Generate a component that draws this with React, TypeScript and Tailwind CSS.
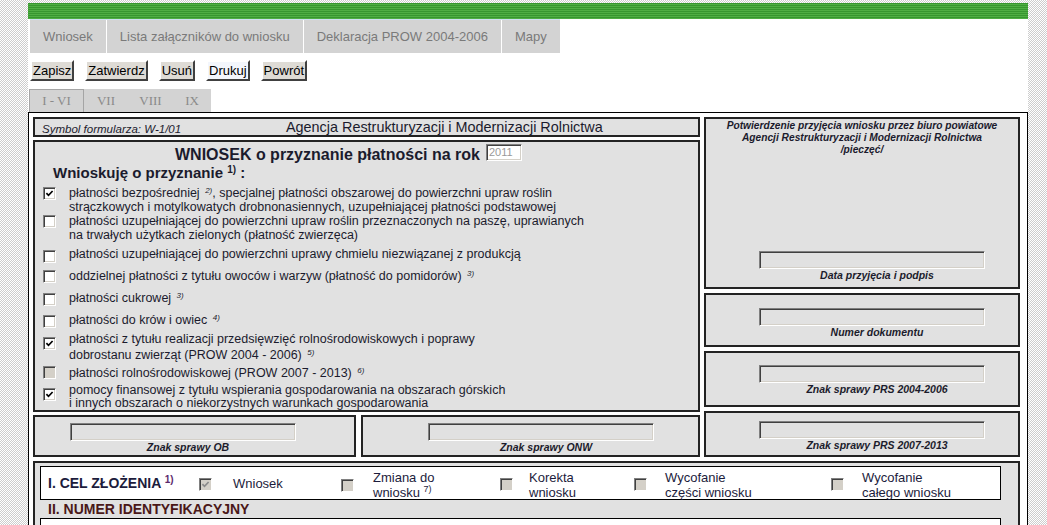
import type React from "react";

// Inset 3D border used by the old-style checkboxes and text fields
const inset =
	"border border-t-[#808080] border-l-[#808080] border-r-white border-b-white shadow-[inset_1px_1px_0_#404040,inset_-1px_-1px_0_#d4d0c8]";

const panel = "border-2 border-[#232323] bg-[#e1e1e1]";

const Box = ({
	checked = false,
	disabled = false,
	className = "",
}: {
	checked?: boolean;
	disabled?: boolean;
	className?: string;
}) => (
	<span
		className={`flex h-[13px] w-[13px] shrink-0 items-center justify-center ${inset} ${disabled ? "bg-[#d4d0c8]" : "bg-white"} ${className}`}
	>
		{checked && (
			<svg viewBox="0 0 9 9" className="h-[9px] w-[9px]">
				<path
					d="M1.4 4.1 3.5 6.3 7.6 2"
					fill="none"
					stroke={disabled ? "#8a8a8a" : "#000"}
					strokeWidth="1.7"
				/>
			</svg>
		)}
	</span>
);

const S = ({ children }: { children: React.ReactNode }) => (
	<sup className="ml-[2px] text-[8px] italic">{children}</sup>
);

const Field = ({ label }: { label: string }) => (
	<div className="flex w-[236px] flex-col items-center">
		<div className={`h-[18px] w-[226px] self-start ${inset}`} />
		<div className="text-[10.5px] font-bold italic leading-[12px] text-[#1c1c2c]">
			{label}
		</div>
	</div>
);

type Item = {
	row: string;
	cb: string;
	lead: string;
	checked?: boolean;
	disabled?: boolean;
	text: React.ReactNode;
};

const items: Item[] = [
	{
		row: "mt-[4px]",
		cb: "mt-[1px]",
		lead: "leading-[14px]",
		checked: true,
		text: (
			<>
				płatności bezpośredniej <S>2)</S>, specjalnej płatności obszarowej do
				powierzchni upraw roślin
				<br />
				strączkowych i motylkowatych drobnonasiennych, uzupełniającej płatności
				podstawowej
			</>
		),
	},
	{
		row: "mt-0",
		cb: "mt-[1px]",
		lead: "leading-[14px]",
		text: (
			<>
				płatności uzupełniającej do powierzchni upraw roślin przeznaczonych na
				paszę, uprawianych
				<br />
				na trwałych użytkach zielonych (płatność zwierzęca)
			</>
		),
	},
	{
		row: "mt-[5px]",
		cb: "mt-[3px]",
		lead: "leading-[14px]",
		text: (
			<>
				płatności uzupełniającej do powierzchni uprawy chmielu niezwiązanej z
				produkcją
			</>
		),
	},
	{
		row: "mt-[6px]",
		cb: "mt-[1px]",
		lead: "leading-[14px]",
		text: (
			<>
				oddzielnej płatności z tytułu owoców i warzyw (płatność do pomidorów){" "}
				<S>3)</S>
			</>
		),
	},
	{
		row: "mt-[8px]",
		cb: "mt-[2px]",
		lead: "leading-[14px]",
		text: (
			<>
				płatności cukrowej <S>3)</S>
			</>
		),
	},
	{
		row: "mt-[7px]",
		cb: "mt-[2px]",
		lead: "leading-[14px]",
		text: (
			<>
				płatności do krów i owiec <S>4)</S>
			</>
		),
	},
	{
		row: "mt-[3px]",
		cb: "mt-[6px]",
		lead: "leading-[16px]",
		checked: true,
		text: (
			<>
				płatności z tytułu realizacji przedsięwzięć rolnośrodowiskowych i
				poprawy
				<br />
				dobrostanu zwierząt (PROW 2004 - 2006) <S>5)</S>
			</>
		),
	},
	{
		row: "mt-[3px]",
		cb: "mt-0",
		lead: "leading-[14px]",
		disabled: true,
		text: (
			<>
				płatności rolnośrodowiskowej (PROW 2007 - 2013) <S>6)</S>
			</>
		),
	},
	{
		row: "mt-[4px]",
		cb: "mt-[4px]",
		lead: "leading-[13px]",
		checked: true,
		text: (
			<>
				pomocy finansowej z tytułu wspierania gospodarowania na obszarach
				górskich
				<br />i innych obszarach o niekorzystnych warunkach gospodarowania
			</>
		),
	},
];

const topTabs = [
	"Wniosek",
	"Lista załączników do wniosku",
	"Deklaracja PROW 2004-2006",
	"Mapy",
];

const buttons = ["Zapisz", "Zatwierdz", "Usuń", "Drukuj", "Powrót"];

export default function App() {
	return (
		<div className="min-h-screen bg-[repeating-conic-gradient(#cdcdcd_0%_25%,#ffffff_0%_50%)] bg-[length:2px_2px] pt-[3px] font-['Liberation_Sans',Arial,sans-serif]">
			<div className="ml-[28px] w-[1000px] bg-white pb-[40px]">
				{/* green bar */}
				<div className="h-[16px] bg-[repeating-linear-gradient(180deg,#37962f_0px,#37962f_1px,#4fae43_1px,#4fae43_2px)]" />

				{/* main tabs */}
				<div className="ml-[2px] flex w-fit gap-px border-t border-[#cfe0f0] bg-white">
					{topTabs.map((t) => (
						<div
							key={t}
							className="flex h-[33px] items-center bg-[#d3d3d3] px-[13px] text-[13px] text-[#7a7a7a]"
						>
							{t}
						</div>
					))}
				</div>

				{/* buttons */}
				<div className="mt-[7px] ml-[2px] flex gap-[11px]">
					{buttons.map((b) => (
						<button
							key={b}
							className={`h-[21px] border-2 border-t-white border-l-white border-r-[#404040] border-b-[#404040] px-px text-[13px] leading-none text-black ${b === "Drukuj" ? "bg-[#f3f6fc]" : "bg-[#dedbd5]"}`}
						>
							{b}
						</button>
					))}
				</div>

				{/* section tabs */}
				<div className="mt-[8px] ml-px flex h-[23px] w-fit bg-[#d3d3d3] font-['Liberation_Serif','Times_New_Roman',serif] text-[13px] text-[#8a8a8a]">
					<div className="flex w-[55px] items-center justify-center border-x border-t border-[#a5a5a5]">
						I - VI
					</div>
					<div className="flex w-[44px] items-center justify-center">VII</div>
					<div className="flex w-[45px] items-center justify-center">VIII</div>
					<div className="flex w-[38px] items-center justify-center">IX</div>
				</div>

				{/* form frame */}
				<div className="border border-black pt-[4px] pr-[7px] pl-[4px] text-[#1b1b2d]">
					<div className="flex gap-[4px]">
						{/* left column */}
						<div className="flex w-[667px] flex-col gap-[3px]">
							<div className={`${panel} flex h-[20px] items-center`}>
								<span className="mt-[3px] w-[251px] pl-[7px] text-[11.5px] italic leading-[12px]">
									Symbol formularza: W-1/01
								</span>
								<span className="text-[14.4px] leading-[16px]">
									Agencja Restrukturyzacji i Modernizacji Rolnictwa
								</span>
							</div>

							<div className={`${panel} h-[272px]`}>
								<div className="mt-[2px] flex h-[20px] items-start pl-[140px]">
									<span className="mt-[1px] text-[16px] font-bold leading-[20px]">
										WNIOSEK o przyznanie płatności na rok
									</span>
									<span
										className={`ml-[6px] flex h-[17px] w-[36px] items-center bg-white pl-[2px] text-[11px] text-[#999] ${inset}`}
									>
										2011
									</span>
								</div>
								<div className="pl-[18px] text-[15px] font-bold leading-[18px]">
									Wnioskuję o przyznanie{" "}
									<sup className="text-[10px] font-bold">1)</sup> :
								</div>
								{items.map((it, i) => (
									<div key={i} className={`flex pl-[8px] ${it.row}`}>
										<Box
											checked={it.checked}
											disabled={it.disabled}
											className={it.cb}
										/>
										<div
											className={`ml-[13px] whitespace-nowrap text-[12.5px] ${it.lead}`}
										>
											{it.text}
										</div>
									</div>
								))}
							</div>

							<div className="flex h-[42px] gap-[5px]">
								<div className={`${panel} w-[323px] pt-[6px] pl-[35px]`}>
									<Field label="Znak sprawy OB" />
								</div>
								<div className={`${panel} flex-1 pt-[6px] pl-[65px]`}>
									<Field label="Znak sprawy ONW" />
								</div>
							</div>
						</div>

						{/* right column */}
						<div className="flex w-[316px] flex-col gap-[4px]">
							<div className={`${panel} flex h-[172px] flex-col pb-[6px]`}>
								<div className="pt-[1px] text-center text-[10.2px] font-bold italic leading-[12px]">
									Potwierdzenie przyjęcia wniosku przez biuro powiatowe
									<br />
									Agencji Restrukturyzacji i Modernizacji Rolnictwa
									<br />
									/pieczęć/
								</div>
								<div className="mt-auto pl-[53px]">
									<Field label="Data przyjęcia i podpis" />
								</div>
							</div>
							<div className={`${panel} h-[54px] pt-[13px] pl-[53px]`}>
								<Field label="Numer dokumentu" />
							</div>
							<div className={`${panel} h-[56px] pt-[12px] pl-[53px]`}>
								<Field label="Znak sprawy PRS 2004-2006" />
							</div>
							<div className={`${panel} h-[46px] pt-[8px] pl-[53px]`}>
								<Field label="Znak sprawy PRS 2007-2013" />
							</div>
						</div>
					</div>

					{/* I. CEL ZŁOŻENIA */}
					<div className={`${panel} mt-[4px] pt-[3px] pb-[6px] pl-[5px]`}>
						<div className="flex h-[34px] w-[961px] items-center border border-black bg-white text-[13px] leading-[15px] text-[#1c1c3c]">
							<div className="w-[151px] pl-[7px] text-[14px] font-bold">
								I. CEL ZŁOŻENIA{" "}
								<sup className="text-[10px] font-bold text-[#5c2a6c]">1)</sup>
							</div>
							<Box checked disabled className="ml-[7px] mt-[2px]" />
							<div className="ml-[21px] w-[108px]">Wniosek</div>
							<Box disabled className="mt-[4px]" />
							<div className="mt-[3px] ml-[19px] w-[127px]">
								Zmiana do
								<br />
								wniosku <sup className="text-[9px]">7)</sup>
							</div>
							<Box disabled className="mt-[2px]" />
							<div className="mt-[3px] ml-[16px] w-[105px]">
								Korekta
								<br />
								wniosku
							</div>
							<Box disabled className="mt-[2px]" />
							<div className="mt-[3px] ml-[18px] w-[166px]">
								Wycofanie
								<br />
								części wniosku
							</div>
							<Box disabled className="mt-[2px]" />
							<div className="mt-[3px] ml-[18px]">
								Wycofanie
								<br />
								całego wniosku
							</div>
						</div>
						<div className="pl-[8px] text-[14px] font-bold leading-[18px] text-[#4a1818]">
							II. NUMER IDENTYFIKACYJNY
						</div>
						<div className="h-[40px] w-[961px] border border-black bg-white" />
					</div>
				</div>
			</div>
		</div>
	);
}
